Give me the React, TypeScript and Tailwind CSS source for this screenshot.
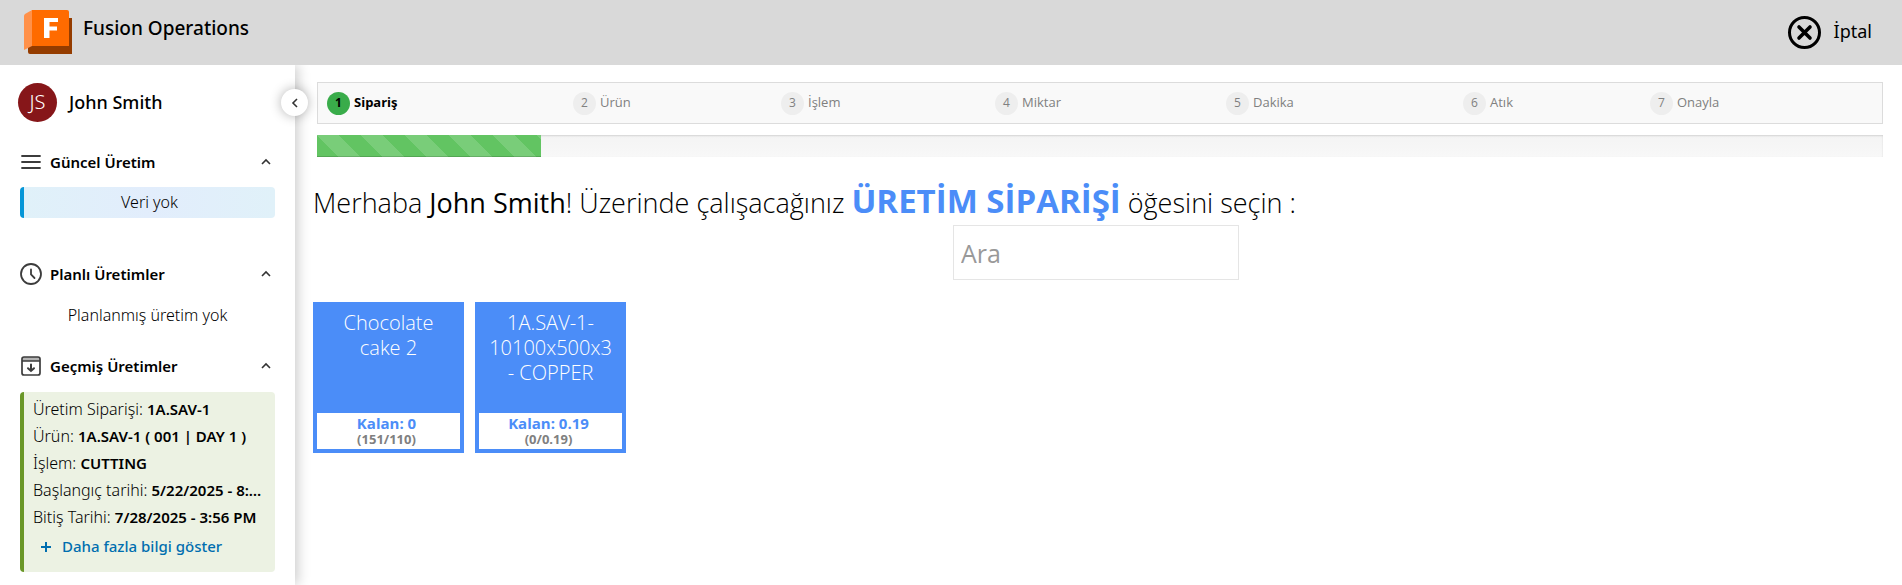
import type { ReactNode } from "react";

const steps = ["Sipariş", "Ürün", "İşlem", "Miktar", "Dakika", "Atık", "Onayla"];

const orders = [
  { name: "Chocolate cake 2", left: "0", ratio: "(151/110)" },
  { name: "1A.SAV-1-10100x500x3 - COPPER", left: "0.19", ratio: "(0/0.19)" },
];

const lastProduction = [
  ["Üretim Siparişi", "1A.SAV-1"],
  ["Ürün", "1A.SAV-1 ( 001 | DAY 1 )"],
  ["İşlem", "CUTTING"],
  ["Başlangıç tarihi", "5/22/2025 - 8:…"],
  ["Bitiş Tarihi", "7/28/2025 - 3:56 PM"],
];

function Logo() {
  return (
    <svg viewBox="0 0 48 44" className="h-11 w-12 shrink-0" role="img" aria-label="Fusion">
      <path d="M4 36H40V8H48V44H6Q4 44 4 42Z" fill="#943c00" />
      <path d="M8 0 1 4Q0 5 0 6V40L8 36Z" fill="#ff914a" />
      <path d="M8 0H43Q45 0 45 2V36H8Z" fill="#ff6b00" />
      <path d="M20 8H34V12H25.500V16.500H33V20.500H25.500V28H20Z" fill="#fff" />
    </svg>
  );
}

function CancelIcon() {
  return (
    <svg viewBox="0 0 33 33" className="size-[33px]" fill="none" stroke="#000" aria-hidden="true">
      <circle cx="16.500" cy="16.500" r="15" strokeWidth="3" />
      <path d="M11 11l11 11M22 11l-11 11" strokeWidth="3.600" strokeLinecap="round" />
    </svg>
  );
}

function MenuIcon() {
  return (
    <svg viewBox="0 0 22 22" className="size-[22px]" stroke="#3c3c3c" strokeWidth="1.800" strokeLinecap="round" aria-hidden="true">
      <path d="M2 5H20M2 11H20M2 17H20" />
    </svg>
  );
}

function ClockIcon() {
  return (
    <svg viewBox="0 0 22 22" className="size-[22px]" fill="none" stroke="#3c3c3c" strokeWidth="1.800" strokeLinecap="round" aria-hidden="true">
      <circle cx="11" cy="11" r="10" />
      <path d="M11 6.500V11.500L14.500 15" />
    </svg>
  );
}

function ArchiveIcon() {
  return (
    <svg viewBox="0 0 22 22" className="size-[22px]" fill="none" stroke="#3c3c3c" strokeWidth="1.700" strokeLinecap="round" aria-hidden="true">
      <path d="M3 2H19L20 6H2Z" fill="#b4b4b4" stroke="none" />
      <path d="M4 2H18Q20 2 20 4V18Q20 20 18 20H4Q2 20 2 18V4Q2 2 4 2ZM2 6H20" />
      <path d="M11 9.500V16M8 13.200L11 16L14 13.200" strokeWidth="2" />
    </svg>
  );
}

function Chevron({ className }: { className: string }) {
  return (
    <svg viewBox="0 0 12 12" className={className} fill="none" stroke="#333" strokeWidth="1.600" aria-hidden="true">
      <path d="M2 8L6 4L10 8" />
    </svg>
  );
}

function SectionHeading({ icon, children }: { icon: ReactNode; children: ReactNode }) {
  return (
    <h2>
      <button type="button" aria-expanded="true" className="flex h-6 w-full items-center pr-[3px] text-left">
        {icon}
        <span className="ml-2 grow text-[15px] font-semibold">{children}</span>
        <Chevron className="size-3" />
      </button>
    </h2>
  );
}

export default function App() {
  return (
    <div className="flex min-h-screen flex-col bg-white font-['Open_Sans',sans-serif] text-black">
      <header className="relative z-10 flex h-[65px] items-center justify-between bg-[#d9d9d9] pr-[30px] pb-px pl-6 font-['Noto_Sans',sans-serif]">
        <div className="flex items-center gap-[11px]">
          <Logo />
          <span className="pb-2 text-[19px] font-medium">Fusion Operations</span>
        </div>
        <button type="button" className="flex items-center gap-[13px] text-lg">
          <CancelIcon />
          <span className="pb-0.5">İptal</span>
        </button>
      </header>

      <div className="flex grow">
        <aside className="relative w-[295px] shrink-0 px-5 font-['Noto_Sans',sans-serif] shadow-[3px_0_12px_rgba(0,0,0,0.2)]">
          <div className="-ml-0.5 mt-[18px] flex items-center gap-3">
            <div className="flex size-[39px] items-center justify-center rounded-full bg-[#861619] pb-0.5 text-xl font-light text-white">JS</div>
            <span className="pb-0.5 text-lg font-medium">John Smith</span>
          </div>
          <button
            type="button"
            aria-label="Menüyü daralt"
            className="absolute top-6 -right-[13px] flex size-[27px] items-center justify-center rounded-full bg-white shadow-[0_0_12px_rgba(0,0,0,0.3)]"
          >
            <Chevron className="size-3 -rotate-90" />
          </button>

          <section className="mt-7">
            <SectionHeading icon={<MenuIcon />}>Güncel Üretim</SectionHeading>
            <p className="mt-[13px] flex h-[31px] items-center justify-center rounded border-l-4 border-[#0696d7] bg-linear-to-r from-[#e0f1f9] via-[#e2edfc] to-[#e0f1f9] pb-px text-base font-light">
              Veri yok
            </p>
          </section>

          <section className="mt-11">
            <SectionHeading icon={<ClockIcon />}>Planlı Üretimler</SectionHeading>
            <p className="mt-[17px] text-center text-base leading-6 font-light">Planlanmış üretim yok</p>
          </section>

          <section className="mt-[27px]">
            <SectionHeading icon={<ArchiveIcon />}>Geçmiş Üretimler</SectionHeading>
            <div className="mt-3.5 h-[180px] rounded border-l-4 border-[#6a9728] bg-[#ecf2e3] pt-1 pr-1 pl-[9px] text-base leading-[27px]">
              {lastProduction.map(([label, value]) => (
                <p key={label} className="truncate font-light">
                  {label}: <span className="text-[15px] font-semibold">{value}</span>
                </p>
              ))}
              <button type="button" className="mt-0.5 ml-[7px] flex items-center gap-2.5 text-[15px] font-medium text-[#006eaf]">
                <svg viewBox="0 0 12 12" className="size-3" stroke="currentColor" strokeWidth="2" aria-hidden="true">
                  <path d="M6 1V11M1 6H11" />
                </svg>
                Daha fazla bilgi göster
              </button>
            </div>
          </section>
        </aside>

        <main className="min-w-0 grow pt-[17px] pr-[19px] pl-[18px]">
          <div className="ml-1">
            <ol className="grid h-[42px] grid-cols-[246fr_208fr_214fr_231fr_237fr_187fr_241fr] items-center border border-[#dcdcdc] bg-[#f9f9f9] text-[13px]">
              {steps.map((step, i) => (
                <li
                  key={step}
                  aria-current={i === 0 ? "step" : undefined}
                  className={i === 0 ? "flex items-center gap-1 pl-[9px] font-bold" : "flex items-center gap-1 pl-[9px] text-[#808080]"}
                >
                  <span
                    className={
                      i === 0
                        ? "flex size-[23px] items-center justify-center rounded-full bg-[#39ac4a] text-xs"
                        : "flex size-[23px] items-center justify-center rounded-full bg-[#eee] text-xs"
                    }
                  >
                    {i + 1}
                  </span>
                  {step}
                </li>
              ))}
            </ol>
            <div
              role="progressbar"
              aria-label="İlerleme"
              aria-valuenow={14}
              className="mt-[11px] h-[22px] bg-linear-to-b from-[#f4f4f4] to-[#f8f8f8] shadow-[inset_0_1px_2px_rgba(0,0,0,0.14)]"
            >
              <div className="h-full w-1/7 bg-[#62c462] bg-[linear-gradient(45deg,rgba(255,255,255,0.15)_25%,transparent_25%,transparent_50%,rgba(255,255,255,0.15)_50%,rgba(255,255,255,0.15)_75%,transparent_75%,transparent)] bg-size-[44px_44px] shadow-[inset_0_-1px_0_rgba(0,0,0,0.15)]" />
            </div>
          </div>

          <h1 className="mt-[21px] text-[27px] leading-[45px] font-light">
            Merhaba <span className="font-normal">John Smith</span>! Üzerinde çalışacağınız{" "}
            <span className="text-[33px] font-bold text-[#4b8df8]">ÜRETİM SİPARİŞİ</span> öğesini seçin :
          </h1>
          <div className="flex justify-center pr-1">
            <input
              type="search"
              aria-label="Ara"
              placeholder="Ara"
              className="h-[55px] w-[286px] border border-[#e5e5e5] bg-white px-[7px] text-[25px] placeholder:text-[#999]"
            />
          </div>
          <div className="mt-[22px] flex flex-wrap gap-[11px]">
            {orders.map((order) => (
              <button
                key={order.name}
                type="button"
                className="flex size-[151px] flex-col bg-[#4b8df8] p-1 text-center"
              >
                <span className="w-full grow px-1.5 pt-1 text-xl leading-[25px] font-light text-white">{order.name}</span>
                <span className="h-9 w-full bg-white pt-0.5 pr-1 font-bold">
                  <span className="block text-[15px] leading-4 text-[#4b8df8]">Kalan: {order.left}</span>
                  <span className="block text-[13px] leading-4 text-[#808080]">{order.ratio}</span>
                </span>
              </button>
            ))}
          </div>
        </main>
      </div>
    </div>
  );
}
